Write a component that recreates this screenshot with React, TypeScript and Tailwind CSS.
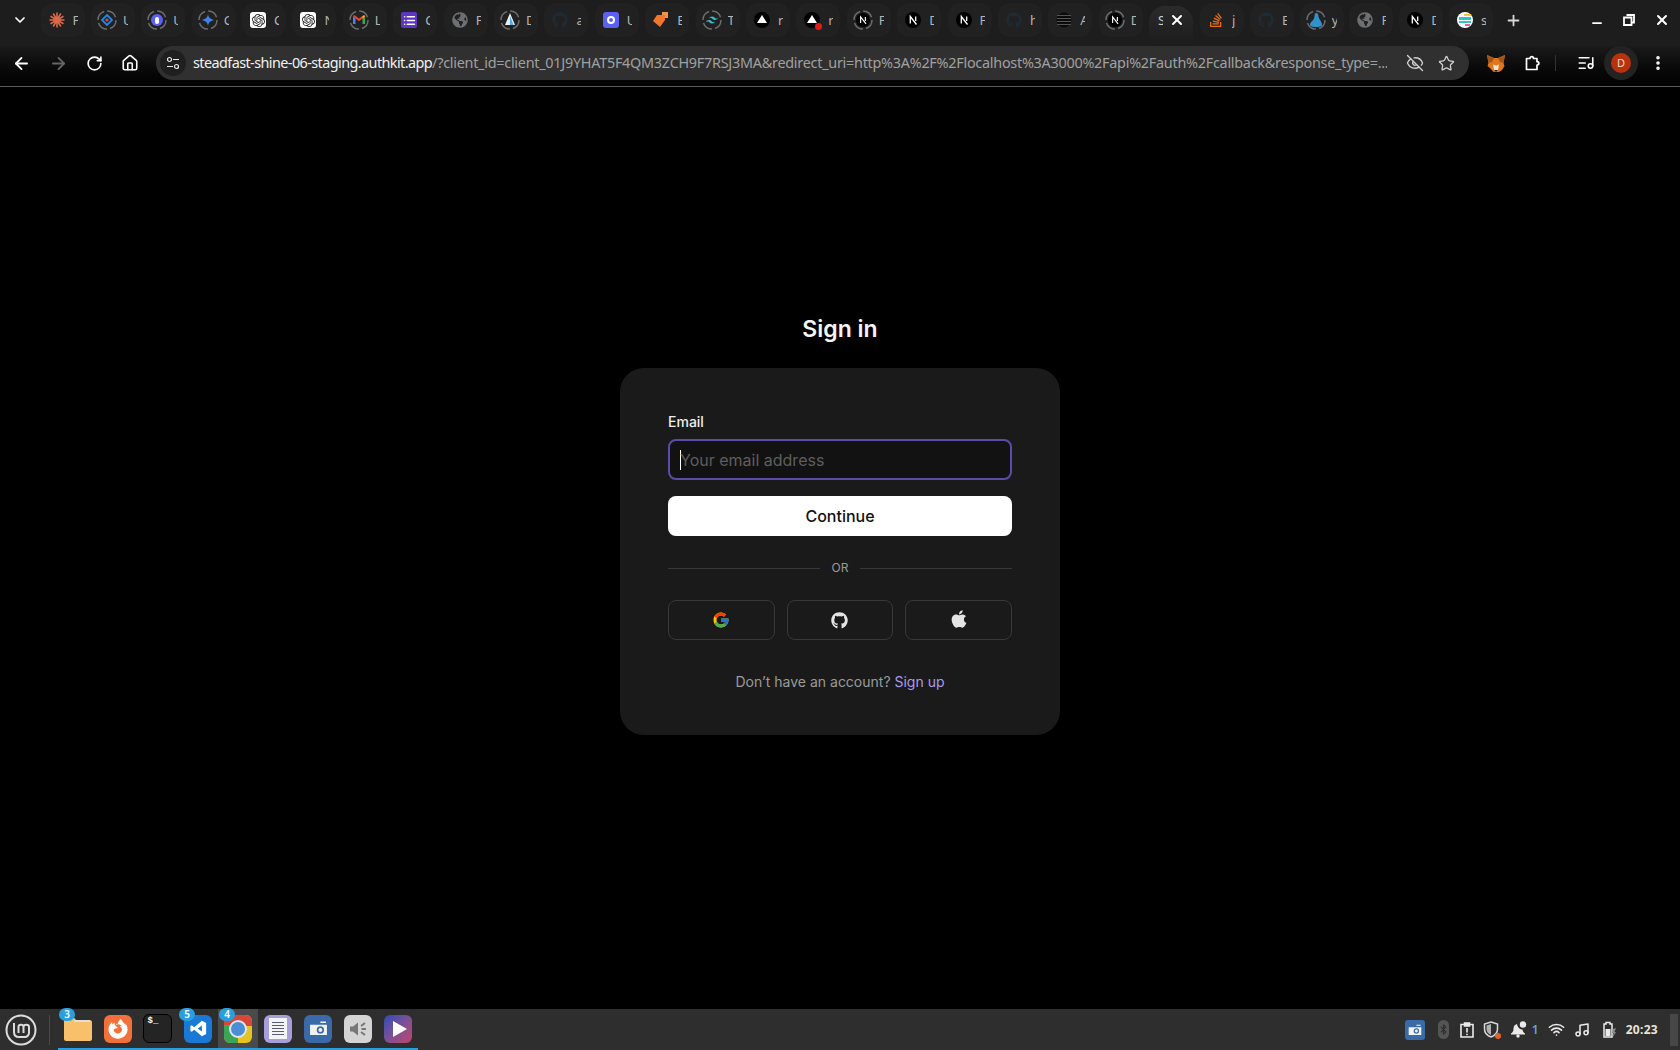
import { ReactNode } from 'react';
import { FcGoogle } from 'react-icons/fc';
import { FaGithub, FaApple, FaStackOverflow, FaFirefoxBrowser, FaGlobeAmericas } from 'react-icons/fa';
import { SiOpenai, SiTailwindcss } from 'react-icons/si';
import {
  ArrowLeft,
  ArrowRight,
  RotateCw,
  Home,
  EyeOff,
  Star,
  X,
  Plus,
  Minus,
  ChevronDown,
  ListMusic,
  MoreVertical,
  Music,
  Wifi,
  Bluetooth,
  List,
} from 'lucide-react';

const URL_HOST = 'steadfast-shine-06-staging.authkit.app';
const URL_REST =
  '/?client_id=client_01J9YHAT5F4QM3ZCH9F7RSJ3MA&redirect_uri=http%3A%2F%2Flocalhost%3A3000%2Fapi%2Fauth%2Fcallback&response_type=...';

function Ring({ children }: { children: ReactNode }) {
  return (
    <div className="relative w-5 h-5 flex items-center justify-center">
      <svg viewBox="0 0 20 20" className="absolute inset-0 w-5 h-5">
        <circle cx="10" cy="10" r="9" fill="none" stroke="#6b6b6b" strokeWidth="1.5" strokeDasharray="11 3.1" />
      </svg>
      {children}
    </div>
  );
}

function Burst() {
  const rays = [0, 30, 60, 90, 120, 150];
  return (
    <svg viewBox="0 0 16 16" className="w-4 h-4">
      {rays.map((r) => (
        <line key={r} x1="0.5" y1="8" x2="15.5" y2="8" stroke="#d9694a" strokeWidth="1.6" transform={`rotate(${r} 8 8)`} />
      ))}
      <circle cx="8" cy="8" r="3.4" fill="#d9694a" />
    </svg>
  );
}

function OpenAiTile() {
  return (
    <div className="w-4 h-4 rounded-[3px] bg-white flex items-center justify-center">
      <SiOpenai className="w-[13px] h-[13px] text-[#222]" />
    </div>
  );
}

function NextIcon({ small }: { small?: boolean }) {
  return (
    <svg viewBox="0 0 16 16" className={small ? 'w-[14px] h-[14px] relative' : 'w-4 h-4'}>
      <circle cx="8" cy="8" r="8" fill="#000" />
      <path d="M5.300 11.500V4.500L11.500 12.500M10.700 4.500V9" fill="none" stroke="#fff" strokeWidth="1.300" />
    </svg>
  );
}

function VercelIcon({ dot }: { dot?: boolean }) {
  return (
    <div className="relative w-4 h-4 rounded-full bg-black flex items-center justify-center">
      <div className="w-0 h-0 border-x-[5px] border-x-transparent border-b-[8px] border-b-white -mt-0.5" />
      {dot && <div className="absolute -right-0.5 -bottom-0.5 w-[7px] h-[7px] rounded-full bg-[#e01b1b]" />}
    </div>
  );
}

function DarkGithub() {
  return <FaGithub className="w-4 h-4 text-[#1f2a33]" />;
}

function Tile({ kind }: { kind: string }) {
  switch (kind) {
    case 'burst':
      return <Burst />;
    case 'diamond':
      return (
        <Ring>
          <svg viewBox="0 0 12 12" className="w-3 h-3">
            <path d="M6 1l5 5-5 5-5-5z" fill="none" stroke="#1c8ae6" strokeWidth="1.8" />
            <circle cx="6" cy="6" r="1.6" fill="#e5484d" />
          </svg>
        </Ring>
      );
    case 'bluering':
      return (
        <Ring>
          <div className="w-3 h-3 rounded-full bg-[#5a60f0] flex items-center justify-center">
            <div className="w-1 h-[7px] rounded-full bg-white" />
          </div>
        </Ring>
      );
    case 'spark':
      return (
        <Ring>
          <svg viewBox="0 0 12 12" className="w-3 h-3">
            <path d="M6 0c.6 3.4 2 5 6 6-4 1-5.400 2.600-6 6-.6-3.400-2-5-6-6 4-1 5.400-2.600 6-6z" fill="#3f83e8" />
          </svg>
        </Ring>
      );
    case 'openai':
      return <OpenAiTile />;
    case 'gmail':
      return (
        <Ring>
          <svg viewBox="0 0 12 10" className="w-3 h-[10px]">
            <path d="M0 9V1.500L2.500 3.400V9z" fill="#4285f4" />
            <path d="M12 9V1.500L9.500 3.400V9z" fill="#34a853" />
            <path d="M0 1.500c0-1 1.200-1.500 2-1L6 3.600 10 .5c.8-.5 2 0 2 1L6 6.300z" fill="#ea4335" />
            <path d="M9.500 3.400L12 1.500c0-.5-.3-1-.8-1.200L9.500 1.600z" fill="#fbbc04" />
          </svg>
        </Ring>
      );
    case 'forms':
      return (
        <div className="w-4 h-4 rounded-[2px] bg-[#5f35c4] flex items-center justify-center">
          <List className="w-[13px] h-[13px] text-white" strokeWidth={3} />
        </div>
      );
    case 'globe':
      return <FaGlobeAmericas className="w-4 h-4 text-[#6d6f72]" />;
    case 'peak':
      return (
        <Ring>
          <svg viewBox="0 0 12 14" className="w-3 h-[14px]">
            <path d="M6 0l5 12H1z" fill="#e8eef5" />
            <path d="M6 3l3.500 9H6z" fill="#58a6e8" />
          </svg>
        </Ring>
      );
    case 'github':
      return <DarkGithub />;
    case 'indigo':
      return (
        <div className="w-4 h-4 rounded-[3px] bg-[#5a60f0] flex items-center justify-center">
          <div className="w-2 h-2 rounded-full border-2 border-white" />
        </div>
      );
    case 'orange':
      return (
        <svg viewBox="0 0 16 16" className="w-4 h-4">
          <path d="M9 0h6v6l-3 0V3H9z" fill="#f5924a" />
          <path d="M8 3h4v5l-5 7-7-6 4-6z" fill="#f0762b" />
        </svg>
      );
    case 'tailwind':
      return (
        <Ring>
          <SiTailwindcss className="w-3 h-3 text-[#3ab6c6]" />
        </Ring>
      );
    case 'vercel':
      return <VercelIcon />;
    case 'verceldot':
      return <VercelIcon dot />;
    case 'nextring':
      return (
        <Ring>
          <NextIcon small />
        </Ring>
      );
    case 'next':
      return <NextIcon />;
    case 'stripes':
      return (
        <svg viewBox="0 0 16 16" className="w-4 h-4">
          <circle cx="8" cy="8" r="7.500" fill="#0b0b0b" />
          {[3.500, 6.500, 9.500, 12.500].map((y) => (
            <line key={y} x1="1" x2="15" y1={y} y2={y} stroke="#555" strokeWidth="1" />
          ))}
        </svg>
      );
    case 'stack':
      return <FaStackOverflow className="w-4 h-4 text-[#e8701a]" />;
    case 'blob':
      return (
        <Ring>
          <svg viewBox="0 0 12 14" className="w-3 h-[14px]">
            <path d="M6 0c2 0 2.500 2 2.500 3.500 0 2 3.500 5 3.500 8.500 0 1.500-3 2-6 2s-6-.5-6-2.500C0 9 4.500 7 4.500 3.500 4.500 1.500 5 0 6 0z" fill="#2f93c9" />
          </svg>
        </Ring>
      );
    case 'cards':
      return (
        <div className="w-4 h-4 rounded-full bg-white flex flex-col items-center justify-center gap-[1px]">
          <div className="w-[7px] h-[2px] bg-[#f5c542] ml-1" />
          <div className="w-3 h-[3px] bg-[#2dc5c5]" />
          <div className="w-3 h-[2px] bg-[#2dc5c5]" />
          <div className="w-[5px] h-[2px] bg-[#ef5da8] ml-1" />
        </div>
      );
    default:
      return null;
  }
}

const TABS_LEFT = [
  ['burst', 'F'], ['diamond', 'U'], ['bluering', 'U'], ['spark', 'G'], ['openai', 'C'],
  ['openai', 'N'], ['gmail', 'L'], ['forms', 'C'], ['globe', 'F'], ['peak', 'D'],
  ['github', 'a'], ['indigo', 'U'], ['orange', 'E'], ['tailwind', 'T'], ['vercel', 'r'],
  ['verceldot', 'r'], ['nextring', 'F'], ['next', 'D'], ['next', 'F'], ['github', 'h'],
  ['stripes', 'A'], ['nextring', 'D'],
];

const TABS_RIGHT = [
  ['stack', 'j'], ['github', 'E'], ['blob', 'y'], ['globe', 'F'], ['next', 'D'], ['cards', 's'],
];

function Tab({ kind, label, narrow }: { kind: string; label: string; narrow?: boolean }) {
  return (
    <div className={`shrink-0 h-[34px] flex items-center ${narrow ? 'w-[49.800px]' : 'w-[50.400px]'}`}>
      <div className="w-[44px] h-[34px] rounded-xl bg-[#212121] flex items-center pl-1 relative">
        <div className="w-6 flex items-center justify-center shrink-0">
          <Tile kind={kind} />
        </div>
        <span className="ml-1 w-[5px] overflow-hidden text-[13px] leading-4 text-[#b4b4b4]">{label}</span>
      </div>
    </div>
  );
}

function TabStrip() {
  return (
    <div className="h-[46px] bg-[#1d1d1d] flex items-start pt-[3px] pl-[4px] shrink-0">
      <div className="w-[30px] h-[34px] flex items-center justify-center mr-[2px] pl-0.5 shrink-0">
        <ChevronDown className="w-4 h-4 text-white" strokeWidth={2.600} />
      </div>
      <div className="flex items-start pl-[4.500px]">
        {TABS_LEFT.map(([kind, label], i) => (
          <Tab key={i} kind={kind} label={label} />
        ))}
      </div>
      <div className="w-[44px] h-[40px] mt-[3px] mr-[7px] rounded-t-2xl bg-gradient-to-b from-[#2b2b2b] to-[#1c1c1c] flex items-center pl-[9px] pb-3 shrink-0">
        <span className="w-[5px] overflow-hidden text-[13px] leading-4 text-[#d0d0d0]">S</span>
        <X className="w-4 h-4 text-white ml-[6px]" strokeWidth={3} />
      </div>
      <div className="flex items-start">
        {TABS_RIGHT.map(([kind, label], i) => (
          <Tab key={i} kind={kind} label={label} narrow />
        ))}
      </div>
      <div className="h-[34px] flex items-center ml-[5.700px]">
        <Plus className="w-[17px] h-[17px] text-[#d8d8d8]" strokeWidth={2.500} />
      </div>
      <div className="ml-auto h-[34px] flex items-center gap-[19px] pr-[10px]">
        <Minus className="w-[14px] h-[14px] text-white translate-y-[3px]" strokeWidth={3} />
        <svg viewBox="0 0 12 12" className="w-3 h-3">
          <path d="M3.500 1h7.500v7.500h-2.500M1 3.500h7.500V11H1z" fill="none" stroke="#fff" strokeWidth="1.800" />
        </svg>
        <X className="w-4 h-4 text-white" strokeWidth={3} />
      </div>
    </div>
  );
}

function FoxIcon() {
  return (
    <svg viewBox="0 0 18 17" className="w-[18px] h-[17px]">
      <path d="M0 0l7 3h4l7-3-1.500 8 1 3-2.500 4-4 2.500H7L3 13 .5 11l1-3z" fill="#e2761b" />
      <path d="M0 0l7 3-2 4-3.500 1zM18 0l-7 3 2 4 3.500 1z" fill="#a0561a" />
      <path d="M6 9.500l3 1 3-1-1 5.500H7z" fill="#f0e2d0" />
      <path d="M7.500 15h3l-.5 1.500H8z" fill="#222" />
    </svg>
  );
}

function PuzzleIcon() {
  return (
    <svg viewBox="0 0 16 16" className="ml-[20px] w-4 h-4" fill="none" stroke="#fff" strokeWidth="1.700" strokeLinejoin="round">
      <path d="M1.500 3.500h3.500c0-2.500 3.500-2.500 3.500 0h3.500v3.200c2.500 0 2.500 3.300 0 3.300v4.500h-10.500z" />
    </svg>
  );
}

function Toolbar() {
  return (
    <div className="h-[40px] bg-gradient-to-b from-[#1a1a1a] to-[#020202] flex items-start shrink-0 border-b border-[#5a5a5a] box-content">
      <div className="w-[156px] pl-[12px] h-[34px] flex items-center gap-[18px] shrink-0">
        <ArrowLeft className="w-[19px] h-[19px] text-white" strokeWidth={2.300} />
        <ArrowRight className="w-[19px] h-[19px] text-[#666]" strokeWidth={2.300} />
        <RotateCw className="w-[17px] h-[17px] text-white" strokeWidth={2.300} />
        <Home className="w-[18px] h-[18px] text-white" strokeWidth={2.100} />
      </div>
      <div className="w-[1313px] h-[34px] rounded-full bg-[#303030] flex items-center pl-1 pr-[14px] shrink-0">
        <div className="w-[26px] h-[26px] rounded-full bg-[#1f1f1f] flex items-center justify-center shrink-0">
          <svg viewBox="0 0 14 14" className="w-[14px] h-[14px]" fill="none" stroke="#e8e8e8" strokeWidth="1.200">
            <circle cx="3.500" cy="3.500" r="2" />
            <path d="M7 3.500h6M1 10.500h6" />
            <circle cx="10.500" cy="10.500" r="2" />
          </svg>
        </div>
        <div className="ml-[7px] w-[1194px] whitespace-nowrap overflow-hidden text-[14.400px] leading-5 font-['Noto_Sans',sans-serif] tracking-[-0.260px] text-[#a0a0a0]">
          <span className="text-[#f2f2f2] tracking-[-0.570px]">{URL_HOST}</span>
          {URL_REST}
        </div>
        <EyeOff className="ml-auto w-[18px] h-[18px] text-[#d0d0d0]" strokeWidth={1.800} />
        <Star className="ml-[14px] w-[17px] h-[17px] text-[#d0d0d0]" strokeWidth={1.800} />
      </div>
      <div className="flex-1 h-[34px] flex items-center pl-[18px]">
        <FoxIcon />
        <PuzzleIcon />
        <div className="ml-[14px] w-px h-4 bg-[#333]" />
        <ListMusic className="ml-[21px] w-[18px] h-[18px] text-white" strokeWidth={2.100} />
        <div className="ml-[9px] w-[34px] h-[34px] rounded-full bg-[#232323] flex items-center justify-center shrink-0">
          <div className="w-5 h-5 rounded-full bg-[#b8330c] text-[11px] text-[#f4d9cf] flex items-center justify-center font-['Noto_Sans',sans-serif]">
            D
          </div>
        </div>
        <MoreVertical className="ml-[11px] w-[18px] h-[18px] text-white" strokeWidth={2.800} />
      </div>
    </div>
  );
}

function SocialButton({ children }: { children: ReactNode }) {
  return (
    <button className="h-10 rounded-lg border border-[#383838] flex items-center justify-center">{children}</button>
  );
}

function SignIn() {
  return (
    <div className="flex-1 bg-black flex flex-col items-center pt-[226px] font-['Inter',sans-serif]">
      <h1 className="text-[23px] leading-8 font-semibold text-[#f4f4f4]">Sign in</h1>
      <div className="mt-[23px] w-[440px] h-[367px] rounded-[24px] bg-[#1a1a1a] px-12 pt-[44px]">
        <label className="block text-sm leading-5 font-medium text-[#eeeeee]">Email</label>
        <div className="mt-[7px] h-[41px] rounded-lg border-2 border-[#5a4ca8] bg-[#121212] flex items-center pl-[10px]">
          <div className="w-px h-5 bg-white" />
          <span className="text-base text-[#5e5e5e] -ml-px">Your email address</span>
        </div>
        <button className="mt-[16px] w-full h-10 rounded-lg bg-white text-base font-medium text-[#111111]">Continue</button>
        <div className="mt-[22px] flex items-center gap-3 h-[20px]">
          <div className="flex-1 h-px bg-[#383838]" />
          <span className="text-xs text-[#9a9a9a]">OR</span>
          <div className="flex-1 h-px bg-[#383838]" />
        </div>
        <div className="mt-[22px] grid grid-cols-3 gap-3">
          <SocialButton>
            <FcGoogle className="w-[18px] h-[18px]" />
          </SocialButton>
          <SocialButton>
            <FaGithub className="w-[17px] h-[17px] text-[#e4e4e4]" />
          </SocialButton>
          <SocialButton>
            <FaApple className="w-[20px] h-[20px] text-[#e4e4e4] -mt-0.5" />
          </SocialButton>
        </div>
        <p className="mt-[32px] text-sm leading-5 text-center text-[#9a9a9a]">
          Don’t have an account? <a className="text-[#a79bf0]">Sign up</a>
        </p>
      </div>
    </div>
  );
}

function Badge({ n }: { n: number }) {
  return (
    <div className="absolute -top-[1px] left-[1px] w-4 h-[13px] rounded-full bg-[#2a9fe0] text-[10px] leading-[13px] text-center font-semibold text-white font-['Noto_Sans',sans-serif]">
      {n}
    </div>
  );
}

function DockItem({ children, badge, active }: { children: ReactNode; badge?: number; active?: boolean }) {
  return (
    <div className={`relative w-10 h-[41px] flex items-center justify-center border-b-2 border-[#2a9fe0] ${active ? 'bg-[#4a4a4a]' : ''}`}>
      {children}
      {badge !== undefined && <Badge n={badge} />}
    </div>
  );
}

function CameraTile() {
  return (
    <div className="w-[28px] h-[28px] rounded-md bg-[#3a6aa8] flex items-center justify-center">
      <svg viewBox="0 0 20 16" className="w-[19px] h-[15px]">
        <path d="M1 4h18v11H1zM12 0.500h6V2h-6z" fill="#f2f2f2" />
        <circle cx="12" cy="9.500" r="3" fill="none" stroke="#3a6aa8" strokeWidth="1.800" />
      </svg>
    </div>
  );
}

function Tray() {
  return (
    <div className="ml-auto flex items-center h-full text-[#eaeaea]">
      <div className="w-[20px] h-[20px] rounded-[3px] bg-[#3a6aa8] flex items-center justify-center">
        <svg viewBox="0 0 20 16" className="w-[14px] h-[12px]">
          <path d="M1 4h18v11H1zM12 0.500h6V2h-6z" fill="#f2f2f2" />
          <circle cx="12" cy="9.500" r="3" fill="none" stroke="#3a6aa8" strokeWidth="1.800" />
        </svg>
      </div>
      <div className="ml-[13px] w-[11px] h-[19px] rounded-full bg-[#555] flex items-center justify-center">
        <Bluetooth className="w-[11px] h-[11px] text-[#2e2e2e]" strokeWidth={2.500} />
      </div>
      <svg viewBox="0 0 14 16" className="ml-[11px] w-[14px] h-4" fill="none" stroke="#eaeaea" strokeWidth="1.600">
        <path d="M4 2.500H1v12.500h12V2.500h-3" />
        <path d="M4.500 1h5v3h-5z" fill="#eaeaea" />
        <path d="M7 6v4.500M7 11.800v1.400" />
      </svg>
      <div className="relative ml-[9px]">
        <svg viewBox="0 0 16 17" className="w-4 h-[17px]">
          <path d="M8 1l6.500 2v5c0 4-3 6.800-6.500 8-3.500-1.200-6.500-4-6.500-8V3z" fill="none" stroke="#d8d8d8" strokeWidth="1.500" />
          <path d="M8 3v11c-2.500-1-4.500-3-4.500-6V4.500z" fill="#b0b0b0" />
        </svg>
        <div className="absolute -right-[2px] -bottom-[1px] w-[6px] h-[6px] rounded-full bg-[#e0642a]" />
      </div>
      <svg viewBox="0 0 18 17" className="ml-[11px] w-[18px] h-[17px]">
        <circle cx="13" cy="3.500" r="3.200" fill="#eaeaea" />
        <path d="M7 3c-2.500.5-3.500 2.500-3.500 5 0 2-1 3.500-2.500 4.500v1h14v-1c-1.500-1-2.500-2.500-2.500-4 -2.500 0-5-2-5.500-5.500z" fill="#eaeaea" />
        <circle cx="8" cy="15" r="1.700" fill="#eaeaea" />
      </svg>
      <span className="ml-[4px] text-[12px] font-semibold text-[#5ea6e0] font-['Noto_Sans',sans-serif]">1</span>
      <Wifi className="ml-[9px] w-[17px] h-[17px]" strokeWidth={2.300} />
      <Music className="ml-[9px] w-[16px] h-[16px]" strokeWidth={2.300} />
      <svg viewBox="0 0 14 17" className="ml-[12px] w-[14px] h-[17px]" fill="none" stroke="#eaeaea" strokeWidth="1.500">
        <path d="M4 1.500h4V3h2v13H2V3h2z" />
        <path d="M3.500 8h5v7h-5z" fill="#eaeaea" stroke="none" />
        <path d="M11 8l3-1-1.500 4H14l-3 5 .5-4H10z" fill="#8a8a8a" stroke="none" />
      </svg>
      <span className="ml-[10px] text-[12px] font-bold tracking-[0.3px] text-[#e8e4d8] font-['Noto_Sans',sans-serif]">20:23</span>
      <div className="ml-[12px] mr-[2px] w-2 h-[32px] bg-[#474747]" />
    </div>
  );
}

function Taskbar() {
  return (
    <div className="h-[41px] bg-[#2e2e2e] flex items-center shrink-0">
      <div className="w-[42px] flex items-center justify-center shrink-0">
        <svg viewBox="0 0 32 32" className="w-8 h-8" fill="none" stroke="#dcdcdc" strokeWidth="2">
          <circle cx="16" cy="16" r="14.500" />
          <path d="M9 9v9c0 3 2 5 5 5h6c2 0 4-2 4-4v-6M13.500 19v-6M13.500 13c0-3 5-3 5 0v6M18.500 13c0-3 5.500-3 5.500 0" />
        </svg>
      </div>
      <div className="w-px h-[30px] bg-[#4a4a4a] ml-[7px] mr-[8px]" />
      <div className="flex items-end h-[41px]">
        <DockItem badge={3}>
          <svg viewBox="0 0 28 24" className="w-[28px] h-[24px]">
            <path d="M0 2.500C0 1 1 0 2.500 0h7L12 3h14c1 0 2 1 2 2v17c0 1-1 2-2 2H2c-1 0-2-1-2-2z" fill="#f8c06a" />
            <path d="M10 3h16v2H10z" fill="#e0e0e0" />
          </svg>
        </DockItem>
        <DockItem>
          <div className="w-[28px] h-[28px] rounded-md bg-[#f2703a] flex items-center justify-center">
            <FaFirefoxBrowser className="w-5 h-5 text-white" />
          </div>
        </DockItem>
        <DockItem>
          <div className="w-[29px] h-[29px] -ml-0.5 rounded-md bg-[#242424] border border-black pl-1 text-[9px] leading-3 text-white font-['Liberation_Mono',monospace] font-bold">
            $_
          </div>
        </DockItem>
        <DockItem badge={5}>
          <div className="w-[28px] h-[28px] rounded-md bg-[#1a78d6] flex items-center justify-center">
            <svg viewBox="0 0 20 20" className="w-[17px] h-[17px]">
              <path d="M14 1l5 2.500v13L14 19 5 11.500l-3 2.300L.5 13v-6l1.500-.8 3 2.300zM14 6.500L9 10l5 3.500z" fill="#fff" fillRule="evenodd" />
            </svg>
          </div>
        </DockItem>
        <DockItem badge={4} active>
          <div className="w-[28px] h-[28px] rounded-md overflow-hidden relative bg-[#e8c21e]">
            <div className="absolute inset-x-0 top-0 h-[11px] bg-[#d8483a]" />
            <div className="absolute left-0 bottom-0 w-[14px] h-[18px] bg-[#3aa655]" />
            <div className="absolute left-[5px] top-[5px] w-[18px] h-[18px] rounded-full bg-[#4a8fd6] border-2 border-[#dfe6ee]" />
          </div>
        </DockItem>
        <DockItem>
          <div className="w-[28px] h-[28px] rounded-md bg-[#a79fdc] flex items-center justify-center">
            <div className="w-[18px] h-[21px] bg-[#f4f4f4] flex flex-col gap-[2px] px-[3px] pt-1">
              <div className="h-px bg-[#5a5a7a]" />
              <div className="h-px bg-[#5a5a7a]" />
              <div className="h-px bg-[#5a5a7a]" />
              <div className="h-px bg-[#5a5a7a]" />
              <div className="h-px bg-[#5a5a7a]" />
            </div>
          </div>
        </DockItem>
        <DockItem>
          <CameraTile />
        </DockItem>
        <DockItem>
          <div className="w-[28px] h-[28px] rounded-md bg-[#d4d4d4] flex items-center justify-center">
            <svg viewBox="0 0 20 20" className="w-5 h-5" fill="none" stroke="#777" strokeWidth="2">
              <path d="M2 7.500h3l5-4v13l-5-4H2z" fill="#777" stroke="none" />
              <path d="M13 7l4-3M13.500 10H18M13 13l4 3" />
            </svg>
          </div>
        </DockItem>
        <DockItem>
          <div className="w-[28px] h-[28px] rounded-md bg-gradient-to-br from-[#2a48b8] to-[#c0406a] flex items-center justify-center">
            <div className="w-0 h-0 border-y-[8px] border-y-transparent border-l-[14px] border-l-white ml-1" />
          </div>
        </DockItem>
      </div>
      <Tray />
    </div>
  );
}

export default function App() {
  return (
    <div className="w-[1680px] h-[1050px] flex flex-col overflow-hidden bg-black">
      <TabStrip />
      <Toolbar />
      <SignIn />
      <Taskbar />
    </div>
  );
}
